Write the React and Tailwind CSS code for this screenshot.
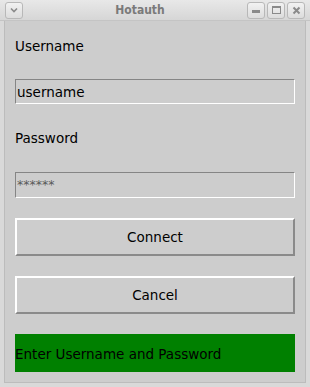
import React from "react";

function TitleBtn({ children }) {
  return (
    <div className="w-[18px] h-[17px] rounded-[3px] border border-[#b8b8b8] bg-gradient-to-b from-[#f2f2f2] to-[#dcdcdc] flex items-center justify-center">
      {children}
    </div>
  );
}

export default function App() {
  return (
    <div
      className="w-[310px] h-[387px] bg-[#d9d9d9] flex flex-col overflow-hidden"
      style={{ fontFamily: '"DejaVu Sans", sans-serif' }}
    >
      {/* Title bar */}
      <div className="h-[21px] flex items-center px-[5px] bg-gradient-to-b from-[#e8e8e8] to-[#d6d6d6] border-b border-[#c4c4c4]">
        <TitleBtn>
          <svg width="10" height="8" viewBox="0 0 10 8">
            <path d="M2 2.5 L5 5.5 L8 2.5" fill="none" stroke="#8a8a8a" strokeWidth="1.6" />
          </svg>
        </TitleBtn>
        <div
          className="flex-1 text-center text-[12px] font-bold text-[#7a7a7a] pl-[10px]"
          style={{ fontFamily: '"DejaVu Sans Condensed", "DejaVu Sans", sans-serif' }}
        >
          Hotauth
        </div>
        <div className="flex gap-[2px]">
          <TitleBtn>
            <div className="w-[8px] h-[3px] bg-[#8a8a8a] mt-[2px]" />
          </TitleBtn>
          <TitleBtn>
            <div className="w-[9px] h-[8px] border border-[#8a8a8a] border-t-[2px]" />
          </TitleBtn>
          <TitleBtn>
            <svg width="9" height="9" viewBox="0 0 9 9">
              <path d="M1.5 1.5 L7.5 7.5 M7.5 1.5 L1.5 7.5" stroke="#8a8a8a" strokeWidth="2" />
            </svg>
          </TitleBtn>
        </div>
      </div>

      {/* Content */}
      <div className="flex-1 mx-[4px] mb-[4px] bg-[#cdcdcd] border-x border-b border-[#bcbcbc] flex flex-col px-[10px] text-[13.5px] text-black">
        <div className="h-[16px] mt-[17px] leading-[16px]">Username</div>
        <div className="mt-[25px] h-[25px] border border-t-[#858585] border-l-[#858585] border-r-white border-b-white flex items-center pl-[1px] pt-[3px] leading-none">
          username
        </div>
        <div className="h-[16px] mt-[26px] leading-[16px]">Password</div>
        <div className="mt-[26px] h-[26px] border border-t-[#858585] border-l-[#858585] border-r-white border-b-white flex items-center pl-[1px] pt-[1px] text-[12.5px] text-[#5a5a5a] leading-none">
          ******
        </div>
        <div className="mt-[20px] h-[38px] border-2 border-t-white border-l-white border-r-[#8a8a8a] border-b-[#8a8a8a] flex items-center justify-center pt-[1px]">
          Connect
        </div>
        <div className="mt-[20px] h-[38px] border-2 border-t-white border-l-white border-r-[#8a8a8a] border-b-[#8a8a8a] flex items-center justify-center pt-[1px]">
          Cancel
        </div>
        <div className="mt-[20px] h-[38px] bg-[#008000] flex items-center pt-[2px]">
          Enter Username and Password
        </div>
      </div>
    </div>
  );
}
